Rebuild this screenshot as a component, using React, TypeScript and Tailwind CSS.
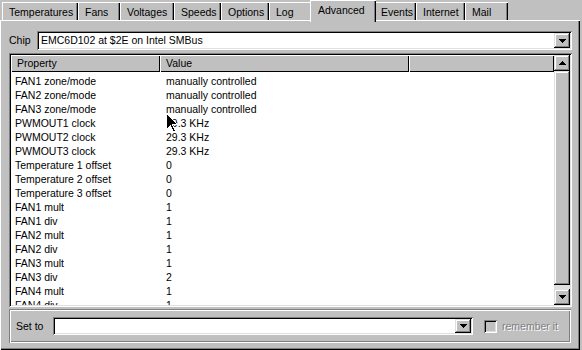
import React from 'react';

// Win95-style bevels
const RAISED = 'shadow-[inset_-1px_-1px_#000,inset_1px_1px_#dfdfdf,inset_-2px_-2px_#808080,inset_2px_2px_#fff]';
const SUNKEN = 'shadow-[inset_1px_1px_#808080,inset_-1px_-1px_#fff,inset_2px_2px_#000,inset_-2px_-2px_#dfdfdf]';

interface Tab {
  label: string;
  width: string;
  active?: boolean;
}

const TABS: Tab[] = [
  { label: 'Temperatures', width: 'w-[76px]' },
  { label: 'Fans', width: 'w-[42px]' },
  { label: 'Voltages', width: 'w-[54px]' },
  { label: 'Speeds', width: 'w-[47px]' },
  { label: 'Options', width: 'w-[48px]' },
  { label: 'Log', width: 'w-[43px]' },
  { label: 'Advanced', width: 'w-[66px]', active: true },
  { label: 'Events', width: 'w-[42px]' },
  { label: 'Internet', width: 'w-[49px]' },
  { label: 'Mail', width: 'w-[43px]' },
];

const ROWS: [string, string][] = [
  ['FAN1 zone/mode', 'manually controlled'],
  ['FAN2 zone/mode', 'manually controlled'],
  ['FAN3 zone/mode', 'manually controlled'],
  ['PWMOUT1 clock', '29.3 KHz'],
  ['PWMOUT2 clock', '29.3 KHz'],
  ['PWMOUT3 clock', '29.3 KHz'],
  ['Temperature 1 offset', '0'],
  ['Temperature 2 offset', '0'],
  ['Temperature 3 offset', '0'],
  ['FAN1 mult', '1'],
  ['FAN1 div', '1'],
  ['FAN2 mult', '1'],
  ['FAN2 div', '1'],
  ['FAN3 mult', '1'],
  ['FAN3 div', '2'],
  ['FAN4 mult', '1'],
  ['FAN4 div', '1'],
];

const Triangle: React.FC<{ up?: boolean }> = ({ up }) => (
  <svg width="7" height="4" viewBox="0 0 7 4" shapeRendering="crispEdges">
    <polygon points={up ? '0,4 7,4 3.5,0' : '0,0 7,0 3.5,4'} fill="#000" />
  </svg>
);

const ArrowButton: React.FC<{ up?: boolean; className?: string }> = ({ up, className }) => (
  <div className={`flex items-center justify-center bg-[#c0c0c0] ${RAISED} ${className ?? ''}`}>
    <Triangle up={up} />
  </div>
);

export default function App() {
  return (
    <div className="relative w-[582px] h-[350px] bg-[#c0c0c0] flex flex-col overflow-hidden font-['Liberation_Sans',Arial,sans-serif] text-[10.5px] text-black leading-none">
      {/* Tabs */}
      <div className="h-[20px] flex items-end pl-[2px] shrink-0">
        {TABS.map((t) =>
          t.active ? (
            <div
              key={t.label}
              className={`${t.width} relative z-10 -mx-[2px] -mb-[2px] h-[22px] pl-[8px] pt-[5px] bg-[#c0c0c0] shadow-[inset_1px_1px_#fff,inset_-1px_0_#000,inset_-2px_0_#808080]`}
            >
              {t.label}
            </div>
          ) : (
            <div
              key={t.label}
              className={`${t.width} h-[18px] pl-[7px] pt-[5px] shadow-[inset_1px_1px_#fff,inset_-1px_0_#000,inset_-2px_0_#808080]`}
            >
              {t.label}
            </div>
          )
        )}
      </div>

      {/* Tab page */}
      <div className="w-[580px] h-[330px] flex flex-col pl-[9px] pr-[8px] pt-[11px] shadow-[inset_1px_1px_#fff,inset_-1px_-1px_#000,inset_-2px_-2px_#808080]">
        {/* Chip row */}
        <div className="flex items-center h-[19px]">
          <div className="w-[28px]">Chip</div>
          <div className={`flex-1 h-[19px] bg-white flex items-center pl-[4px] pr-[2px] ${SUNKEN}`}>
            <span className="flex-1">EMC6D102 at $2E on Intel SMBus</span>
            <ArrowButton className="w-[16px] h-[15px]" />
          </div>
        </div>

        {/* List view */}
        <div className={`mt-[3px] h-[254px] bg-white p-[2px] flex ${SUNKEN}`}>
          <div className="flex-1 flex flex-col overflow-hidden">
            <div className="h-[17px] flex shrink-0">
              <div className="w-[149px] pl-[6px] flex items-center bg-[#c0c0c0] shadow-[inset_1px_1px_#fff,inset_-1px_-1px_#000]">
                Property
              </div>
              <div className="w-[249px] pl-[6px] flex items-center bg-[#c0c0c0] shadow-[inset_1px_1px_#fff,inset_-1px_-1px_#000]">
                Value
              </div>
              <div className="flex-1 bg-[#c0c0c0] shadow-[inset_1px_1px_#fff,inset_-1px_-1px_#000]" />
            </div>
            <div className="flex-1 overflow-hidden pt-[2px]">
              {ROWS.map(([k, v]) => (
                <div key={k} className="h-[14px] flex items-center">
                  <div className="w-[149px] pl-[4px]">{k}</div>
                  <div className="pl-[6px]">{v}</div>
                </div>
              ))}
            </div>
          </div>
          {/* Scrollbar */}
          <div className="w-[16px] flex flex-col bg-[#e0e0e0]">
            <ArrowButton up className="h-[16px]" />
            <div className={`flex-1 bg-[#c0c0c0] mb-[4px] ${RAISED}`} />
            <ArrowButton className="h-[16px]" />
          </div>
        </div>

        {/* Set to */}
        <div className="mt-[2px] mr-[1px] h-[34px] flex items-center pl-[7px] shadow-[inset_1px_1px_#808080,inset_-1px_-1px_#fff,inset_2px_2px_#fff,inset_-2px_-2px_#808080]">
          <div className="w-[37px]">Set to</div>
          <div className={`w-[420px] h-[18px] bg-white flex items-center justify-end pr-[2px] ${SUNKEN}`}>
            <ArrowButton className="w-[16px] h-[14px]" />
          </div>
          <div className={`ml-[11px] w-[13px] h-[13px] ${SUNKEN}`} />
          <div className="ml-[5px] text-[#808080] [text-shadow:1px_1px_0_#ffffff]">remember it</div>
        </div>
      </div>

      {/* Mouse pointer */}
      <svg className="absolute left-[166px] top-[113px]" width="12" height="20" viewBox="0 0 12 20" shapeRendering="crispEdges">
        <path d="M0.5 0.5 L0.5 16.5 L4.5 12.5 L7.5 19.5 L9.5 18.5 L6.5 11.5 L11.5 11.5 Z" fill="#000" stroke="#fff" strokeWidth="1" />
      </svg>
    </div>
  );
}
